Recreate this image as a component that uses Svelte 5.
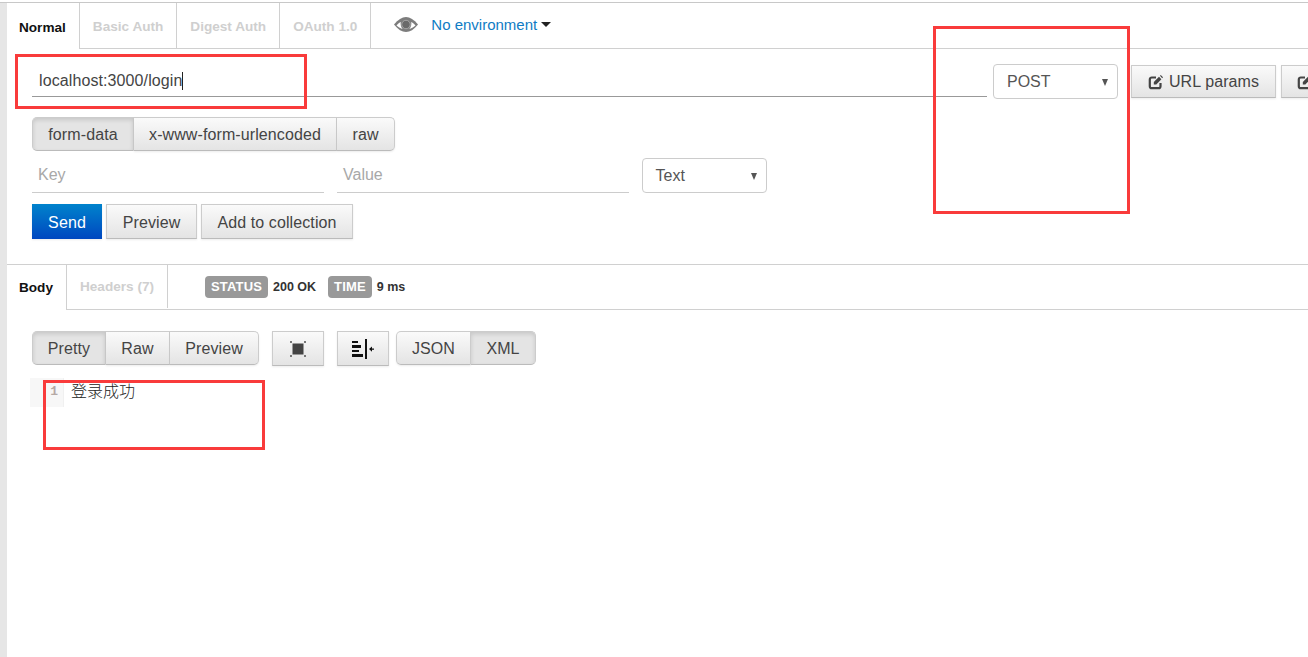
<script>
  const authTabs = ['Normal', 'Basic Auth', 'Digest Auth', 'OAuth 1.0'];
  const bodyModes = ['form-data', 'x-www-form-urlencoded', 'raw'];
  const viewModes = ['Pretty', 'Raw', 'Preview'];
  const formats = ['JSON', 'XML'];
</script>

<div class="page">
  <div class="stripe"></div>
  <main class="main">
    <nav class="tabs auth-tabs">
      {#each authTabs as tab, i}
        <span class="tab" class:active={i === 0}>{tab}</span>
      {/each}
      <div class="env">
        <svg class="eye" width="24" height="15" viewBox="0 0 24 15">
          <path d="M0 7.500C4 2.500 8 0 12 0s8 2.500 12 7.500c-4 5-8 7.500-12 7.500S4 12.500 0 7.500z" fill="#7d7d7d" />
          <path d="M2.500 8.500C4 6.500 5.500 5.500 6.800 5c-.5 2.500.1 5 1.900 7-2-.6-4-1.800-6.200-3.500zM21.500 8.500C20 6.500 18.500 5.500 17.200 5c.5 2.500-.1 5-1.900 7 2-.6 4-1.800 6.200-3.500z" fill="#fff" />
          <circle cx="12" cy="7.500" r="4.200" fill="#6a6a6a" stroke="#c4c4c4" stroke-width="0.600" />
        </svg>
        <span class="env-name">No environment</span>
        <span class="caret"></span>
      </div>
    </nav>

    <section class="url-row">
      <div class="url-input">localhost:3000/login<span class="cursor"></span></div>
      <div class="select method">POST<span class="arrow"></span></div>
      <button class="btn url-btn">
        <svg width="16" height="16" viewBox="0 0 16 16" fill="none">
          <path d="M12.500 9v3.200a2 2 0 0 1-2 2H3.800a2 2 0 0 1-2-2V5.500a2 2 0 0 1 2-2H8" stroke="#444" stroke-width="2.200" />
          <path d="M5.800 10.500V8l5.200-5.200 2.400 2.400L8.300 10.500z" fill="#444" />
          <path d="M12 1.800l.8-.8 2.200 2.200-.8 1z" fill="#444" />
        </svg>
        URL params
      </button>
      <button class="btn url-btn" aria-label="Headers">
        <svg width="16" height="16" viewBox="0 0 16 16" fill="none">
          <path d="M12.500 9v3.200a2 2 0 0 1-2 2H3.800a2 2 0 0 1-2-2V5.500a2 2 0 0 1 2-2H8" stroke="#444" stroke-width="2.200" />
          <path d="M5.800 10.500V8l5.200-5.200 2.400 2.400L8.300 10.500z" fill="#444" />
        </svg>
      </button>
    </section>

    <div class="group body-modes">
      {#each bodyModes as mode, i}
        <button class="btn" class:pressed={i === 0}>{mode}</button>
      {/each}
    </div>

    <div class="kv-row">
      <span class="field key">Key</span>
      <span class="field value">Value</span>
      <div class="select type">Text<span class="arrow"></span></div>
    </div>

    <div class="actions">
      <button class="btn send">Send</button>
      <button class="btn preview">Preview</button>
      <button class="btn collection">Add to collection</button>
    </div>

    <section class="response">
      <nav class="tabs res-tabs">
        <span class="tab active">Body</span>
        <span class="tab">Headers (7)</span>
        <div class="meta">
          <span class="badge">STATUS</span>
          <span class="meta-val status">200 OK</span>
          <span class="badge">TIME</span>
          <span class="meta-val">9 ms</span>
        </div>
      </nav>

      <div class="toolbar">
        <div class="group view-modes">
          {#each viewModes as mode, i}
            <button class="btn" class:pressed={i === 0}>{mode}</button>
          {/each}
        </div>
        <button class="btn icon-btn first" aria-label="Fullscreen">
          <svg width="18" height="18" viewBox="0 0 18 18">
            <rect x="3.500" y="3.500" width="11" height="11" fill="#444" />
            <path d="M1 1h2v2H1zM15 1h2v2h-2zM1 15h2v2H1zM15 15h2v2h-2z" fill="#777" />
          </svg>
        </button>
        <button class="btn icon-btn second" aria-label="Wrap">
          <svg width="22" height="20" viewBox="0 0 22 20">
            <path d="M0 2h6v2H0zM0 6h9v3H0zM0 11h7v2H0zM0 15h11v3H0z" fill="#111" />
            <path d="M13 0h2v20h-2z" fill="#111" />
            <path d="M17 10l3-2.500v2h2v1.200h-2v2z" fill="#111" />
          </svg>
        </button>
        <div class="group formats">
          {#each formats as format, i}
            <button class="btn" class:pressed={i === 1}>{format}</button>
          {/each}
        </div>
      </div>

      <div class="code">
        <span class="gutter">1</span>
        <span class="line">登录成功</span>
      </div>
    </section>
  </main>

  <div class="mark mark-url"></div>
  <div class="mark mark-method"></div>
  <div class="mark mark-result"></div>
</div>

<style>
  :global(body) {
    margin: 0;
    background: #fff;
  }

  .page {
    position: relative;
    display: flex;
    height: 657px;
    overflow: hidden;
    font-family: "Liberation Sans", Arial, sans-serif;
    color: #333;
  }

  .stripe {
    flex: none;
    width: 7px;
    margin-top: 3px;
    background: #e6e6e6;
  }

  .main {
    position: relative;
    flex: 1;
    min-width: 0;
  }

  .main::before {
    content: '';
    position: absolute;
    top: 2px;
    left: -7px;
    right: 0;
    height: 1px;
    background: #c8c8c8;
  }

  .tabs {
    display: flex;
    align-items: stretch;
    border-bottom: 1px solid #d0d0d0;
  }

  .auth-tabs {
    height: 45px;
    padding-top: 3px;
  }

  .tab {
    display: flex;
    align-items: center;
    padding: 2px 13px 0;
    border-right: 1px solid #d0d0d0;
    font-size: 13.6px;
    font-weight: 700;
    color: #cfcfcf;
  }

  .tab.active {
    padding-left: 12px;
    margin-bottom: -1px;
    background: #fff;
    color: #111;
  }

  .env {
    display: flex;
    align-items: center;
    margin-left: 23px;
    margin-bottom: 2px;
  }

  .eye {
    margin-right: 13px;
  }

  .env-name {
    font-size: 15px;
    color: #0f7cc4;
  }

  .caret {
    margin-left: 4px;
    border-left: 5px solid transparent;
    border-right: 5px solid transparent;
    border-top: 5px solid #222;
  }

  .url-row {
    display: flex;
    align-items: flex-start;
    padding: 15px 0 0 25px;
    height: 52px;
    box-sizing: border-box;
  }

  .url-input {
    flex: none;
    width: 955px;
    height: 33px;
    box-sizing: border-box;
    padding: 8px 0 0 7px;
    border-bottom: 1px solid #999;
    font-size: 16px;
    letter-spacing: 0.1px;
    line-height: 18px;
    color: #444;
    white-space: nowrap;
  }

  .cursor {
    display: inline-block;
    width: 1px;
    height: 18px;
    background: #222;
    vertical-align: top;
  }

  .select {
    position: relative;
    flex: none;
    box-sizing: border-box;
    border: 1px solid #ccc;
    border-radius: 4px;
    background: #fff;
    font-size: 16px;
    color: #555;
  }

  .arrow {
    position: absolute;
    right: 9px;
    top: 50%;
    margin-top: -3px;
    border-left: 3.5px solid transparent;
    border-right: 3.5px solid transparent;
    border-top: 7px solid #555;
  }

  .method {
    width: 125px;
    height: 35px;
    margin-left: 6px;
    padding: 8px 0 0 13px;
    line-height: 18px;
  }

  .btn {
    box-sizing: border-box;
    border: 1px solid #ccc;
    border-bottom-color: #bbb;
    border-radius: 0;
    background: linear-gradient(#fafafa, #e4e4e4);
    box-shadow: 0 1px 2px rgba(0, 0, 0, 0.08);
    font-family: inherit;
    font-size: 16px;
    letter-spacing: 0.1px;
    color: #444;
    padding: 2px 0 0;
    white-space: nowrap;
  }

  .url-btn {
    flex: none;
    display: flex;
    align-items: center;
    justify-content: center;
    gap: 5px;
    width: 145px;
    height: 33px;
    margin: 1px 0 0 13px;
    padding: 0;
  }

  .url-btn + .url-btn {
    margin-left: 5px;
    justify-content: flex-start;
    padding-left: 15px;
  }

  .group {
    display: inline-flex;
    border-radius: 5px;
  }

  .group .btn {
    height: 34px;
    border-left-width: 0;
  }

  .group .btn:first-child {
    border-left-width: 1px;
    border-radius: 5px 0 0 5px;
  }

  .group .btn:last-child {
    border-radius: 0 5px 5px 0;
  }

  .group .btn.pressed {
    background: #e4e4e4;
    box-shadow: inset 0 2px 4px rgba(0, 0, 0, 0.13);
  }

  .body-modes {
    display: flex;
    margin: 16px 0 0 25px;
  }

  .body-modes .btn:nth-child(1) {
    width: 102px;
  }

  .body-modes .btn:nth-child(2) {
    width: 203px;
  }

  .body-modes .btn:nth-child(3) {
    width: 58px;
  }

  .kv-row {
    display: flex;
    align-items: flex-start;
    margin: 7px 0 0 25px;
    height: 35px;
  }

  .field {
    box-sizing: border-box;
    height: 35px;
    padding: 8px 0 0 6px;
    border-bottom: 1px solid #ccc;
    font-size: 16px;
    line-height: 18px;
    color: #a8a8a8;
  }

  .key {
    width: 292px;
  }

  .value {
    width: 292px;
    margin-left: 13px;
    padding-left: 6px;
  }

  .type {
    width: 125px;
    height: 35px;
    margin-left: 13px;
    padding: 8px 0 0 12.5px;
    line-height: 18px;
  }

  .actions {
    display: flex;
    gap: 4px;
    margin: 11px 0 0 25px;
  }

  .actions .btn {
    height: 35px;
  }

  .send {
    width: 70px;
    border: none;
    background: linear-gradient(#0083cc, #0047c0);
    color: #fff;
  }

  .preview {
    width: 91px;
  }

  .collection {
    width: 152px;
  }

  .response {
    margin-top: 25px;
    border-top: 1px solid #d0d0d0;
  }

  .res-tabs {
    height: 44px;
  }

  .res-tabs .tab {
    padding-top: 0;
    margin-bottom: 1px;
  }

  .res-tabs .tab.active {
    margin-bottom: -1px;
  }

  .meta {
    display: flex;
    align-items: center;
    margin-left: 37px;
    font-size: 12.5px;
    font-weight: 700;
    color: #333;
  }

  .badge {
    box-sizing: border-box;
    height: 22px;
    padding: 0 6px;
    border-radius: 4px;
    background: #999;
    color: #fff;
    font-size: 13px;
    letter-spacing: 0.15px;
    line-height: 22px;
  }

  .meta-val {
    margin-left: 5px;
  }

  .status {
    margin-right: 12px;
  }

  .toolbar {
    display: flex;
    align-items: flex-start;
    margin: 21px 0 0 25px;
  }

  .view-modes .btn:nth-child(1) {
    width: 74px;
  }

  .view-modes .btn:nth-child(2) {
    width: 64px;
  }

  .view-modes .btn:nth-child(3) {
    width: 89px;
  }

  .icon-btn {
    display: flex;
    align-items: center;
    justify-content: center;
    width: 52px;
    height: 35px;
    padding: 0;
  }

  .first {
    margin-left: 13px;
  }

  .second {
    margin-left: 13px;
  }

  .formats {
    margin-left: 7px;
  }

  .formats .btn:nth-child(1) {
    width: 75px;
  }

  .formats .btn:nth-child(2) {
    width: 65px;
  }

  .code {
    display: flex;
    margin: 12px 0 0 23px;
  }

  .gutter {
    box-sizing: border-box;
    width: 34px;
    height: 29px;
    padding: 6px 5px 0 0;
    background: #f7f7f7;
    border-right: 1px solid #f0f0f0;
    font-family: "Liberation Mono", monospace;
    font-size: 13px;
    font-weight: 700;
    line-height: 16px;
    text-align: right;
    color: #b5a9a5;
  }

  .line {
    margin: 2px 0 0 7px;
    font-family: "Noto Sans CJK SC", sans-serif;
    font-size: 16px;
    font-weight: 300;
    line-height: 20px;
    color: #222;
  }

  .mark {
    position: absolute;
    box-sizing: border-box;
    border: 3px solid #f93b3b;
    pointer-events: none;
  }

  .mark-url {
    left: 15px;
    top: 54px;
    width: 292px;
    height: 55px;
  }

  .mark-method {
    left: 933px;
    top: 26px;
    width: 197px;
    height: 188px;
  }

  .mark-result {
    left: 43px;
    top: 380px;
    width: 222px;
    height: 70px;
  }
</style>
